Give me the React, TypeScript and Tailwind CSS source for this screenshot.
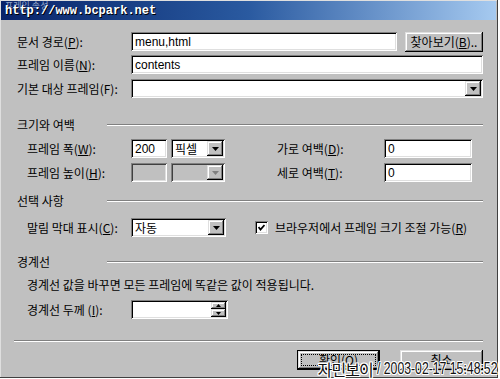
import React from "react";

const sunken =
  "bg-white shadow-[inset_1px_1px_0_#808080,inset_-1px_-1px_0_#ffffff,inset_2px_2px_0_#000000,inset_-2px_-2px_0_#dfdfdf]";
const sunkenDis =
  "bg-[#c0c0c0] shadow-[inset_1px_1px_0_#808080,inset_-1px_-1px_0_#ffffff,inset_2px_2px_0_#404040,inset_-2px_-2px_0_#dfdfdf]";
const raised =
  "bg-[#c0c0c0] shadow-[inset_-1px_-1px_0_#000000,inset_1px_1px_0_#dfdfdf,inset_-2px_-2px_0_#808080,inset_2px_2px_0_#ffffff]";

const font = { fontFamily: '"Noto Sans CJK KR", "Liberation Sans", sans-serif' };

function Arrow({ disabled = false }: { disabled?: boolean }) {
  return (
    <div className={`${raised} w-[16px] h-[15px] flex items-center justify-center shrink-0`}>
      <svg width="7" height="4" viewBox="0 0 7 4">
        <polygon points="0,0 7,0 3.5,4" fill={disabled ? "#808080" : "#000"} />
      </svg>
    </div>
  );
}

function Select({ w, value, disabled = false }: { w: string; value?: string; disabled?: boolean }) {
  return (
    <div className={`${disabled ? sunkenDis : sunken} ${w} h-[19px] flex items-center pl-[4px] pr-[2px]`}>
      <span className="flex-1 text-[12px] leading-none text-black">{value}</span>
      <Arrow disabled={disabled} />
    </div>
  );
}

function Input({ w, value, disabled = false }: { w: string; value?: string; disabled?: boolean }) {
  return (
    <div className={`${disabled ? sunkenDis : sunken} ${w} h-[19px] flex items-center pl-[4px]`}>
      <span className="text-[12px] leading-none text-black" style={{ fontFamily: '"Liberation Sans", sans-serif' }}>
        {value}
      </span>
    </div>
  );
}

function Label({ children, w = "w-[114px]" }: { children: React.ReactNode; w?: string }) {
  return <div className={`${w} text-[12px] leading-none text-black shrink-0`}>{children}</div>;
}

function Section({ title }: { title: string }) {
  return (
    <div className="flex items-center h-[16px] pl-[17px] pr-[14px]">
      <span className="text-[12px] leading-none text-black w-[90px]">{title}</span>
      <div className="flex-1 flex flex-col">
        <div className="h-px bg-[#808080]" />
        <div className="h-px bg-white" />
      </div>
    </div>
  );
}

const outline =
  "1px 0 0 #fff, -1px 0 0 #fff, 0 1px 0 #fff, 0 -1px 0 #fff, 1px 1px 0 #fff, -1px -1px 0 #fff, 1px -1px 0 #fff, -1px 1px 0 #fff";

export default function App() {
  return (
    <div className="w-[500px] h-[379px] bg-white" style={font}>
      <div className="relative w-[498px] h-[378px] bg-[#c0c0c0] border-r border-b border-[#404040] shadow-[inset_1px_1px_0_#dfdfdf] flex flex-col">
        {/* title bar */}
        <div className="relative h-[19px] mx-[1px] mt-[1px] bg-gradient-to-r from-[#0a246a] via-[#2a5aa0] to-[#a6caf0] flex items-center pl-[4px]">
          <span className="absolute left-[4px] top-[0px] text-[9px] leading-none text-[#8fa3c8]">프레임 속성</span>
          <span
            className="relative text-white font-bold text-[12px] leading-none"
            style={{ fontFamily: '"Liberation Mono", monospace', textShadow: "1px 1px 0 #000" }}
          >
            http://www.bcpark.net
          </span>
        </div>

        {/* rows */}
        <div className="flex flex-col pl-[17px] pr-[14px] mt-[11px]">
          <div className="flex items-center h-[21px]">
            <Label>
              문서 경로(<u>P</u>):
            </Label>
            <Input w="w-[266px]" value="menu,html" />
            <div className={`${raised} ml-[8px] w-[78px] h-[20px] flex items-center justify-center text-[12px] leading-none`}>
              찾아보기(<u>B</u>)..
            </div>
          </div>
          <div className="flex items-center h-[19px] mt-[3px]">
            <Label>
              프레임 이름(<u>N</u>):
            </Label>
            <Input w="w-[354px]" value="contents" />
          </div>
          <div className="flex items-center h-[19px] mt-[5px]">
            <Label>기본 대상 프레임(F):</Label>
            <Select w="w-[354px]" />
          </div>
        </div>

        <div className="mt-[19px]">
          <Section title="크기와 여백" />
        </div>

        <div className="flex flex-col pl-[27px] mt-[6px]">
          <div className="flex items-center h-[19px]">
            <Label w="w-[104px]">
              프레임 폭(<u>W</u>):
            </Label>
            <Input w="w-[36px]" value="200" />
            <div className="ml-[4px]">
              <Select w="w-[54px]" value="픽셀" />
            </div>
            <div className="ml-[52px]">
              <Label w="w-[107px]">
                가로 여백(<u>D</u>):
              </Label>
            </div>
            <Input w="w-[88px]" value="0" />
          </div>
          <div className="flex items-center h-[19px] mt-[5px]">
            <Label w="w-[104px]">
              프레임 높이(<u>H</u>):
            </Label>
            <Input w="w-[36px]" disabled />
            <div className="ml-[4px]">
              <Select w="w-[54px]" disabled />
            </div>
            <div className="ml-[52px]">
              <Label w="w-[107px]">
                세로 여백(<u>T</u>):
              </Label>
            </div>
            <Input w="w-[88px]" value="0" />
          </div>
        </div>

        <div className="mt-[11px]">
          <Section title="선택 사항" />
        </div>

        <div className="flex items-center pl-[27px] mt-[9px] h-[19px]">
          <Label w="w-[104px]">
            말림 막대 표시(<u>C</u>):
          </Label>
          <Select w="w-[95px]" value="자동" />
          <div className={`${sunken} ml-[29px] w-[13px] h-[13px] flex items-center justify-center`}>
            <svg width="7" height="7" viewBox="0 0 7 7">
              <polyline points="0.5,3 2.5,5.5 6.5,1" fill="none" stroke="#000" strokeWidth="1.8" />
            </svg>
          </div>
          <span className="ml-[7px] text-[12px] leading-none">
            브라우저에서 프레임 크기 조절 가능(<u>R</u>)
          </span>
        </div>

        <div className="mt-[17px]">
          <Section title="경계선" />
        </div>

        <div className="pl-[27px] mt-[9px] text-[12px] leading-none">
          경계선 값을 바꾸면 모든 프레임에 똑같은 값이 적용됩니다.
        </div>

        <div className="flex items-center pl-[27px] mt-[9px] h-[19px]">
          <Label w="w-[104px]">
            경계선 두께 (<u>I</u>):
          </Label>
          <div className={`${sunken} w-[97px] h-[19px] flex justify-end items-center pr-[2px]`}>
            <div className="flex flex-col">
              <div className={`${raised} w-[15px] h-[7px] flex items-center justify-center`}>
                <svg width="5" height="3" viewBox="0 0 5 3">
                  <polygon points="0,3 5,3 2.5,0" fill="#000" />
                </svg>
              </div>
              <div className={`${raised} w-[15px] h-[8px] flex items-center justify-center`}>
                <svg width="5" height="3" viewBox="0 0 5 3">
                  <polygon points="0,0 5,0 2.5,3" fill="#000" />
                </svg>
              </div>
            </div>
          </div>
        </div>

        <div className="mx-[14px] mt-[21px] flex flex-col">
          <div className="h-px bg-[#808080]" />
          <div className="h-px bg-white" />
        </div>

        <div className="flex justify-end pr-[14px] mt-[8px] gap-[20px]">
          <div className="w-[83px] h-[20px] border border-black">
            <div className={`${raised} w-full h-full flex items-center justify-center p-[3px]`}>
              <span className="w-full h-full border border-dotted border-black flex items-center justify-center text-[12px] leading-none">
                확인(<u>O</u>)
              </span>
            </div>
          </div>
          <div className={`${raised} w-[83px] h-[20px] flex items-center justify-center text-[12px] leading-none`}>
            취소
          </div>
        </div>

        {/* watermark */}
        <div
          className="absolute right-[1px] bottom-[0px] flex items-end leading-none text-[#111]"
          style={{ textShadow: outline }}
        >
          <span className="text-[16px] tracking-[-1px]">자민보이</span>
          <span
            className="inline-block text-[17px] ml-[4px]"
            style={{
              fontFamily: '"Liberation Sans", sans-serif',
              transform: "scaleX(0.72)",
              transformOrigin: "left",
              marginRight: "-48px",
            }}
          >
            / 2003-02-17 15:48:52
          </span>
        </div>
      </div>
    </div>
  );
}
